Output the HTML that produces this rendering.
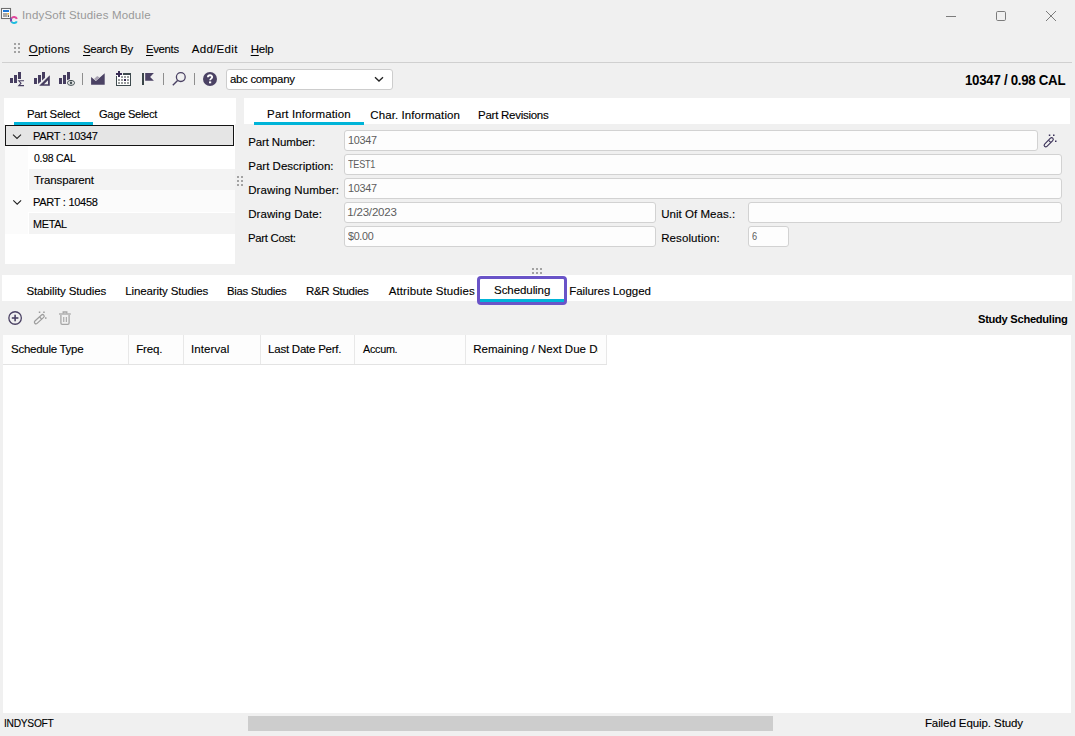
<!DOCTYPE html>
<html><head><meta charset="utf-8">
<style>
html,body{margin:0;padding:0;}
body{width:1075px;height:736px;background:#f0f0f0;position:relative;overflow:hidden;font-family:"Liberation Sans",sans-serif;font-size:12px;color:#000;}
.a{position:absolute;}
.t{position:absolute;white-space:pre;line-height:14px;font-size:11.5px;-webkit-text-stroke:0.12px currentColor;}
.t u{text-decoration-thickness:1px;text-underline-offset:1.5px;}
.w{position:absolute;background:#fff;}
.inp{position:absolute;background:#fdfdfd;border:1px solid #d2d2d2;border-radius:3px;box-sizing:border-box;height:21px;}
.dot{position:absolute;width:2px;height:2px;background:#a3a3a3;}
.hs{position:absolute;top:335px;width:1px;height:29px;background:#e8e8e8;}
svg{position:absolute;left:0;top:0;}
</style></head><body>

<!-- Menu separator -->
<div class="a" style="left:2px;top:62px;width:1070px;height:1px;background:#d0d0d0;"></div>

<!-- Combo -->
<div class="a" style="left:226px;top:69px;width:167px;height:21px;background:#fff;border:1px solid #cdcdcd;border-radius:3px;box-sizing:border-box;"></div>

<!-- Left panel -->
<div class="w" style="left:4px;top:98px;width:232px;height:26px;"></div>
<div class="w" style="left:5px;top:124px;width:230px;height:140px;"></div>
<div class="a" style="left:14px;top:122px;width:79px;height:2.5px;background:#00b4d8;"></div>

<!-- Tree rows -->
<div class="a" style="left:5px;top:146px;width:23px;height:88px;background:#fbfbfb;"></div>
<div class="a" style="left:29px;top:169px;width:206px;height:21px;background:#f3f3f3;"></div>
<div class="a" style="left:5px;top:190px;width:230px;height:22px;background:#fbfbfb;"></div>
<div class="a" style="left:29px;top:213px;width:206px;height:21px;background:#f3f3f3;"></div>
<div class="a" style="left:5px;top:125px;width:229px;height:21px;background:#e5e5e5;border:1px solid #141414;box-sizing:border-box;"></div>

<!-- Right panel tabs -->
<div class="w" style="left:244px;top:98px;width:826px;height:26px;"></div>
<div class="a" style="left:254px;top:122px;width:110px;height:2.5px;background:#00b4d8;"></div>

<!-- Form inputs -->
<div class="inp" style="left:344px;top:130px;width:694px;"></div>
<div class="inp" style="left:344px;top:154px;width:718px;"></div>
<div class="inp" style="left:344px;top:178px;width:718px;"></div>
<div class="inp" style="left:344px;top:202px;width:312px;"></div>
<div class="inp" style="left:344px;top:226px;width:312px;"></div>
<div class="inp" style="left:748px;top:202px;width:314px;"></div>
<div class="inp" style="left:748px;top:226px;width:41px;"></div>

<!-- Splitter grips -->
<div class="dot" style="left:237px;top:176px"></div><div class="dot" style="left:241px;top:176px"></div>
<div class="dot" style="left:237px;top:180px"></div><div class="dot" style="left:241px;top:180px"></div>
<div class="dot" style="left:237px;top:184px"></div><div class="dot" style="left:241px;top:184px"></div>
<div class="dot" style="left:532px;top:268px"></div><div class="dot" style="left:536px;top:268px"></div><div class="dot" style="left:540px;top:268px"></div>
<div class="dot" style="left:532px;top:272px"></div><div class="dot" style="left:536px;top:272px"></div><div class="dot" style="left:540px;top:272px"></div>
<!-- menu grip -->
<div class="dot" style="left:14px;top:43px"></div><div class="dot" style="left:18px;top:43px"></div>
<div class="dot" style="left:14px;top:47px"></div><div class="dot" style="left:18px;top:47px"></div>
<div class="dot" style="left:14px;top:51px"></div><div class="dot" style="left:18px;top:51px"></div>

<!-- Bottom tabs -->
<div class="w" style="left:2px;top:275px;width:1070px;height:26px;"></div>
<div class="a" style="left:477px;top:276px;width:90px;height:29px;border:3px solid #6a54c8;border-radius:4px;box-sizing:border-box;background:#fff;"></div>
<div class="a" style="left:480px;top:299px;width:84px;height:3px;background:#00b4d8;"></div>

<!-- Grid -->
<div class="w" style="left:3px;top:335px;width:1068px;height:378px;"></div>
<div class="a" style="left:3px;top:335px;width:603px;height:29px;background:#fdfdfd;"></div>
<div class="a" style="left:3px;top:364px;width:604px;height:1px;background:#e3e3e3;"></div>
<div class="hs" style="left:128px"></div>
<div class="hs" style="left:183px"></div>
<div class="hs" style="left:260px"></div>
<div class="hs" style="left:354px"></div>
<div class="hs" style="left:465px"></div>
<div class="hs" style="left:606px"></div>

<!-- Status bar -->
<div class="a" style="left:248px;top:716px;width:525px;height:15px;background:#cdcdcd;"></div>

<div class="t" style="left:22.0px;top:7.9px;letter-spacing:0.177px;color:#999;-webkit-text-stroke:0;">IndySoft Studies Module</div>
<div class="t" style="left:28.8px;top:41.7px;letter-spacing:0.217px;"><u>O</u>ptions</div>
<div class="t" style="left:82.9px;top:41.7px;letter-spacing:-0.300px;transform:scaleX(0.9901);transform-origin:0 0;"><u>S</u>earch By</div>
<div class="t" style="left:145.9px;top:41.7px;letter-spacing:-0.300px;transform:scaleX(0.9821);transform-origin:0 0;"><u>E</u>vents</div>
<div class="t" style="left:191.7px;top:41.7px;letter-spacing:0.314px;">Add/Edit</div>
<div class="t" style="left:250.7px;top:41.7px;letter-spacing:-0.200px;"><u>H</u>elp</div>
<div class="t" style="left:230.3px;top:72.0px;letter-spacing:-0.300px;transform:scaleX(0.9924);transform-origin:0 0;">abc company</div>
<div class="t" style="left:964.6px;top:71.9px;letter-spacing:-0.300px;font-size:14px;line-height:16px;font-weight:700;-webkit-text-stroke:0;transform:scaleX(0.9479);transform-origin:0 0;">10347 / 0.98 CAL</div>
<div class="t" style="left:27.1px;top:106.6px;letter-spacing:-0.300px;transform:scaleX(0.9923);transform-origin:0 0;">Part Select</div>
<div class="t" style="left:99.4px;top:107.1px;letter-spacing:-0.300px;transform:scaleX(0.9683);transform-origin:0 0;">Gage Select</div>
<div class="t" style="left:32.9px;top:129.0px;letter-spacing:-0.300px;transform:scaleX(0.9595);transform-origin:0 0;">PART : 10347</div>
<div class="t" style="left:33.9px;top:151.0px;letter-spacing:-0.300px;transform:scaleX(0.9129);transform-origin:0 0;">0.98 CAL</div>
<div class="t" style="left:33.9px;top:173.0px;letter-spacing:-0.140px;">Transparent</div>
<div class="t" style="left:32.9px;top:195.0px;letter-spacing:-0.300px;transform:scaleX(0.9595);transform-origin:0 0;">PART : 10458</div>
<div class="t" style="left:33.0px;top:217.0px;letter-spacing:-0.300px;transform:scaleX(0.9397);transform-origin:0 0;">METAL</div>
<div class="t" style="left:267.1px;top:106.7px;letter-spacing:0.113px;">Part Information</div>
<div class="t" style="left:370.3px;top:107.6px;letter-spacing:0.087px;">Char. Information</div>
<div class="t" style="left:478.1px;top:107.6px;letter-spacing:-0.269px;">Part Revisions</div>
<div class="t" style="left:248.2px;top:135.0px;letter-spacing:-0.136px;">Part Number:</div>
<div class="t" style="left:248.2px;top:159.0px;letter-spacing:0.019px;">Part Description:</div>
<div class="t" style="left:248.2px;top:183.0px;letter-spacing:0.093px;">Drawing Number:</div>
<div class="t" style="left:248.2px;top:207.0px;letter-spacing:0.083px;">Drawing Date:</div>
<div class="t" style="left:248.2px;top:231.0px;letter-spacing:-0.300px;transform:scaleX(0.9894);transform-origin:0 0;">Part Cost:</div>
<div class="t" style="left:661.2px;top:207.0px;letter-spacing:0.038px;">Unit Of Meas.:</div>
<div class="t" style="left:661.2px;top:231.0px;letter-spacing:0.100px;">Resolution:</div>
<div class="t" style="left:347.6px;top:133.0px;letter-spacing:-0.300px;color:#5c5c5c;-webkit-text-stroke:0;transform:scaleX(0.9430);transform-origin:0 0;">10347</div>
<div class="t" style="left:348.0px;top:157.0px;letter-spacing:-0.300px;color:#5c5c5c;-webkit-text-stroke:0;transform:scaleX(0.7902);transform-origin:0 0;">TEST1</div>
<div class="t" style="left:347.6px;top:181.0px;letter-spacing:-0.300px;color:#5c5c5c;-webkit-text-stroke:0;transform:scaleX(0.9430);transform-origin:0 0;">10347</div>
<div class="t" style="left:347.2px;top:205.0px;letter-spacing:-0.175px;color:#5c5c5c;-webkit-text-stroke:0;">1/23/2023</div>
<div class="t" style="left:348.2px;top:229.0px;letter-spacing:-0.300px;color:#5c5c5c;-webkit-text-stroke:0;transform:scaleX(0.9317);transform-origin:0 0;">$0.00</div>
<div class="t" style="left:752.2px;top:229.0px;letter-spacing:-0.300px;color:#5c5c5c;-webkit-text-stroke:0;transform:scaleX(0.8000);transform-origin:0 0;">6</div>
<div class="t" style="left:26.4px;top:284.0px;letter-spacing:-0.119px;">Stability Studies</div>
<div class="t" style="left:125.2px;top:284.0px;letter-spacing:-0.119px;">Linearity Studies</div>
<div class="t" style="left:227.4px;top:284.0px;letter-spacing:-0.300px;transform:scaleX(0.9849);transform-origin:0 0;">Bias Studies</div>
<div class="t" style="left:306.3px;top:284.0px;letter-spacing:-0.300px;transform:scaleX(0.9984);transform-origin:0 0;">R&amp;R Studies</div>
<div class="t" style="left:388.7px;top:284.0px;letter-spacing:0.106px;">Attribute Studies</div>
<div class="t" style="left:494.1px;top:283.0px;letter-spacing:-0.078px;">Scheduling</div>
<div class="t" style="left:569.2px;top:284.0px;letter-spacing:-0.057px;">Failures Logged</div>
<div class="t" style="left:977.8px;top:312.0px;letter-spacing:-0.300px;font-weight:700;-webkit-text-stroke:0;transform:scaleX(0.9697);transform-origin:0 0;">Study Scheduling</div>
<div class="t" style="left:11.1px;top:342.0px;letter-spacing:-0.283px;">Schedule Type</div>
<div class="t" style="left:136.2px;top:342.0px;letter-spacing:-0.150px;">Freq.</div>
<div class="t" style="left:191.1px;top:342.0px;letter-spacing:0.071px;">Interval</div>
<div class="t" style="left:268.1px;top:342.0px;letter-spacing:-0.236px;">Last Date Perf.</div>
<div class="t" style="left:363.0px;top:342.0px;letter-spacing:-0.300px;transform:scaleX(0.9397);transform-origin:0 0;">Accum.</div>
<div class="a" style="left:473px;top:335px;width:125px;height:29px;overflow:hidden;"><div class="t" style="left:0.2px;top:7.0px;letter-spacing:0.016px;">Remaining / Next Due Date</div></div>
<div class="t" style="left:4.3px;top:716.0px;letter-spacing:-0.300px;transform:scaleX(0.8889);transform-origin:0 0;">INDYSOFT</div>
<div class="t" style="left:924.9px;top:716.0px;letter-spacing:-0.083px;">Failed Equip. Study</div>

<svg width="1075" height="736" viewBox="0 0 1075 736">
  <!-- app icon -->
  <rect x="1.5" y="8.5" width="9" height="10" fill="#fff" stroke="#6e6e6e" stroke-width="1.1"/>
  <rect x="3" y="10" width="6" height="2" fill="#1f78d6"/>
  <rect x="3" y="13" width="4.5" height="4" fill="#a8a8a8"/>
  <rect x="7.4" y="13" width="1.6" height="1.6" fill="#f2b233"/>
  <rect x="8" y="15.2" width="1" height="1.8" fill="#555"/>
  <path d="M11.46,18.22 A3.1,3.1 0 0 1 16.91,18.94" fill="none" stroke="#e2479c" stroke-width="2"/>
  <path d="M11.46,21.78 A3.1,3.1 0 0 1 11.46,18.22" fill="none" stroke="#6a45a8" stroke-width="2"/>
  <path d="M16.81,21.31 A3.1,3.1 0 0 1 11.46,21.78" fill="none" stroke="#1cbde0" stroke-width="2"/>
  <!-- window controls -->
  <line x1="946" y1="16.5" x2="956" y2="16.5" stroke="#7c7c7c" stroke-width="1"/>
  <rect x="996.5" y="11.5" width="9" height="9" rx="1.2" fill="none" stroke="#7c7c7c" stroke-width="1"/>
  <path d="M1046,11 L1056,21 M1056,11 L1046,21" stroke="#7c7c7c" stroke-width="1"/>

  <!-- toolbar icon 1 -->
  <g fill="#463d60">
    <rect x="10" y="78" width="3" height="5"/>
    <rect x="14" y="75" width="3" height="8"/>
    <rect x="18" y="72" width="3" height="7"/>
  </g>
  <path d="M24,80.8 H18.8 L21,83.2 L18.8,85.6 H24" fill="none" stroke="#463d60" stroke-width="1.1"/>
  <!-- icon 2 -->
  <g fill="#463d60">
    <rect x="34" y="78" width="3" height="6"/>
    <polygon points="38,75 41,75 41,81.5 38,84"/>
    <polygon points="42,72 45,72 45,77.8 42,80.4"/>
    <polygon points="39.2,85.8 49.8,75.2 49.8,85.8"/>
  </g>
  <polygon points="44,84.2 48,80.2 48,84.2" fill="#f0f0f0"/>
  <!-- icon 3 -->
  <g fill="#463d60">
    <rect x="59" y="78" width="3" height="6"/>
    <rect x="63" y="75" width="3" height="9"/>
    <polygon points="67,72 70,72 70,79 67,80.3"/>
  </g>
  <ellipse cx="71" cy="82.9" rx="3.5" ry="2.5" fill="#fafafa" stroke="#3e4a4e" stroke-width="1"/>
  <circle cx="71" cy="82.9" r="1.3" fill="#3e4a4e"/>
  <circle cx="71" cy="82.9" r="0.5" fill="#8a9090"/>
  <!-- separators -->
  <rect x="82" y="73" width="1" height="12" fill="#8e8e8e"/>
  <rect x="163" y="73" width="1" height="12" fill="#8e8e8e"/>
  <rect x="194" y="73" width="1" height="12" fill="#8e8e8e"/>
  <!-- area chart -->
  <polygon points="91.1,77 95.9,81 104.7,73.2 104.7,84.8 91.1,84.8" fill="#4b4264"/>
  <polygon points="94,78.9 97.2,75.9 99.6,77.4 96.2,80.6" fill="#a9a3b4"/>
  <!-- calendar -->
  <g fill="#3e4a4e">
    <rect x="116" y="76" width="1" height="10"/>
    <rect x="116" y="85" width="15" height="1"/>
    <rect x="130" y="73" width="1" height="13"/>
    <rect x="123" y="73" width="8" height="2"/>
  </g>
  <rect x="117" y="75" width="13" height="10" fill="#fff"/>
  <rect x="116" y="76" width="1" height="10" fill="#3e4a4e"/>
  <g fill="#9a9e9e">
    <rect x="121" y="76" width="2" height="2"/><rect x="124" y="76" width="2" height="2"/><rect x="127" y="76" width="2" height="2"/>
    <rect x="118" y="79" width="2" height="2"/><rect x="121" y="79" width="2" height="2"/><rect x="127" y="79" width="2" height="2"/>
    <rect x="118" y="82" width="2" height="2"/><rect x="121" y="82" width="2" height="2"/><rect x="124" y="82" width="2" height="2"/><rect x="127" y="82" width="2" height="2"/>
  </g>
  <rect x="124" y="79" width="2" height="2" fill="#3a2d55"/>
  <g fill="#3a2d55">
    <rect x="118" y="71" width="2" height="6"/>
    <rect x="116" y="73" width="6" height="2"/>
  </g>
  <!-- flag -->
  <rect x="142" y="73" width="2" height="12" fill="#3a4548"/>
  <polygon points="145.2,73 153.9,73 150.1,77 153.9,80.8 145.2,80.8" fill="#4b4264"/>
  <!-- magnifier -->
  <circle cx="180.8" cy="77.1" r="4.4" fill="none" stroke="#4b4264" stroke-width="1.3"/>
  <line x1="172.8" y1="85.2" x2="177.6" y2="80.4" stroke="#4b4264" stroke-width="1.4"/>
  <!-- help -->
  <circle cx="210" cy="79" r="7" fill="#4b4264"/>
  <path d="M207.9,77.2 C207.9,74.6 212.2,74.6 212.2,77.1 C212.2,78.6 210.1,78.7 210.1,80.3" fill="none" stroke="#fff" stroke-width="1.8"/>
  <rect x="209" y="81.4" width="2.2" height="1.9" fill="#fff"/>
  <!-- combo chevron -->
  <path d="M375,77.2 L379,81 L383,77.2" fill="none" stroke="#222" stroke-width="1.3"/>
  <!-- tree chevrons -->
  <path d="M13,134.6 L17,138.4 L21,134.6" fill="none" stroke="#222" stroke-width="1.1"/>
  <path d="M13.3,200.3 L17.2,204.2 L21.1,200.3" fill="none" stroke="#222" stroke-width="1.1"/>
  <!-- wand (form) -->
  <g>
    <line x1="1045.8" y1="145.2" x2="1051.6" y2="139.4" stroke="#3a3158" stroke-width="4.4" stroke-linecap="round"/>
    <line x1="1045.8" y1="145.2" x2="1051.6" y2="139.4" stroke="#f0f0f0" stroke-width="2.2" stroke-linecap="round"/>
    <line x1="1048.6" y1="140.3" x2="1050.7" y2="142.4" stroke="#3a3158" stroke-width="1.1"/>
    <rect x="1048.8" y="134.5" width="1.5" height="1.5" fill="#3a3158"/>
    <rect x="1053" y="134.5" width="1.5" height="1.5" fill="#3a3158"/>
    <rect x="1055" y="140.5" width="1.5" height="1.5" fill="#3a3158"/>
  </g>
  <!-- study toolbar: plus circle -->
  <circle cx="15.1" cy="318" r="6.25" fill="none" stroke="#4b4264" stroke-width="1.3"/>
  <rect x="11.8" y="317.2" width="6.6" height="1.6" fill="#4b4264"/>
  <rect x="14.3" y="314.7" width="1.6" height="6.6" fill="#4b4264"/>
  <!-- wand grey -->
  <g>
    <line x1="36" y1="322.2" x2="42.6" y2="316.2" stroke="#9c9c9c" stroke-width="4.4" stroke-linecap="round"/>
    <line x1="36" y1="322.2" x2="42.6" y2="316.2" stroke="#f0f0f0" stroke-width="2" stroke-linecap="round"/>
    <line x1="39.6" y1="317" x2="41.6" y2="319" stroke="#9c9c9c" stroke-width="1.1"/>
    <rect x="38.8" y="311.5" width="1.5" height="1.5" fill="#9c9c9c"/>
    <rect x="43.2" y="311.5" width="1.5" height="1.5" fill="#9c9c9c"/>
    <rect x="45" y="317.3" width="1.5" height="1.5" fill="#9c9c9c"/>
  </g>
  <!-- trash grey -->
  <g fill="none" stroke="#a6a6a6" stroke-width="1.3">
    <line x1="59" y1="314" x2="70.8" y2="314"/>
    <path d="M63.2,313.5 V312 H66.8 V313.5"/>
    <path d="M60.9,315 V323 Q60.9,324.3 62.2,324.3 H67.8 Q69.1,324.3 69.1,323 V315"/>
  </g>
  <rect x="63.2" y="317" width="1.1" height="5" fill="#a6a6a6"/>
  <rect x="65.8" y="317" width="1.1" height="5" fill="#a6a6a6"/>
</svg>
</body></html>
